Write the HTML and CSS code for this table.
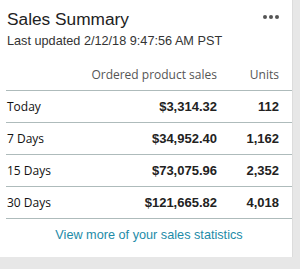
FILE: index.html
```html
<!DOCTYPE html>
<html lang="en">
<head>
  <meta charset="UTF-8" />
  <title>Sales Summary</title>
  <link rel="stylesheet" href="styles.css">
</head>
<body>

<div class="card">
  <div class="card-head">
    <h2>Sales Summary</h2>
    <span class="more"><i></i><i></i><i></i></span>
  </div>
  <div class="updated">Last updated 2/12/18 9:47:56 AM PST</div>

  <div class="sales">
    <div class="row head">
      <span></span>
      <span class="num">Ordered product sales</span>
      <span class="num">Units</span>
    </div>
    <div class="row">
      <span>Today</span>
      <span class="num val">$3,314.32</span>
      <span class="num val">112</span>
    </div>
    <div class="row">
      <span>7 Days</span>
      <span class="num val">$34,952.40</span>
      <span class="num val">1,162</span>
    </div>
    <div class="row">
      <span>15 Days</span>
      <span class="num val">$73,075.96</span>
      <span class="num val">2,352</span>
    </div>
    <div class="row">
      <span>30 Days</span>
      <span class="num val">$121,665.82</span>
      <span class="num val">4,018</span>
    </div>
  </div>

  <a class="view-more" href="#">View more of your sales statistics</a>
</div>

</body>
</html>
```

FILE: styles.css
```css
body {
  margin: 0;
  background: #e7e7e7;
  font-family: 'Liberation Sans', Arial, sans-serif;
  color: #111;
}
.card {
  width: 293px;
  height: 257px;
  background: white;
  border-right: 1px solid #dcdcdc;
  padding-left: 6px;
  box-sizing: border-box;
}
.card-head {
  display: flex;
  justify-content: space-between;
  align-items: center;
  padding-top: 9px;
  padding-right: 13px;
}
.card-head h2 {
  margin: 0 0 0 1px;
  font-size: 17.3px;
  line-height: 20px;
  font-weight: normal;
  color: #222;
}
.more {
  display: flex;
  gap: 2px;
  margin-top: -5px;
}
.more i {
  width: 4px;
  height: 4px;
  border-radius: 50%;
  background: #555;
}
.updated {
  margin: 4px 0 0 1px;
  font-size: 12.7px;
  line-height: 16px;
  color: #333;
}
.sales {
  margin-top: 10px;
}
.row {
  display: grid;
  grid-template-columns: 1fr 140px 62px;
  align-items: center;
  height: 31px;
  padding-right: 13px;
  padding-left: 1px;
  border-bottom: 1px solid #aebbbb;
  font-family: 'Open Sans', sans-serif;
  font-size: 12px;
  color: #111;
}
.row.head {
  color: #555;
}
.num {
  text-align: right;
}
.val {
  font-family: 'Liberation Sans', Arial, sans-serif;
  font-weight: bold;
  font-size: 13px;
  color: #222;
}
.view-more {
  display: block;
  margin-top: 9px;
  text-align: center;
  font-size: 12.7px;
  color: #1d8ba8;
  text-decoration: none;
}
```
